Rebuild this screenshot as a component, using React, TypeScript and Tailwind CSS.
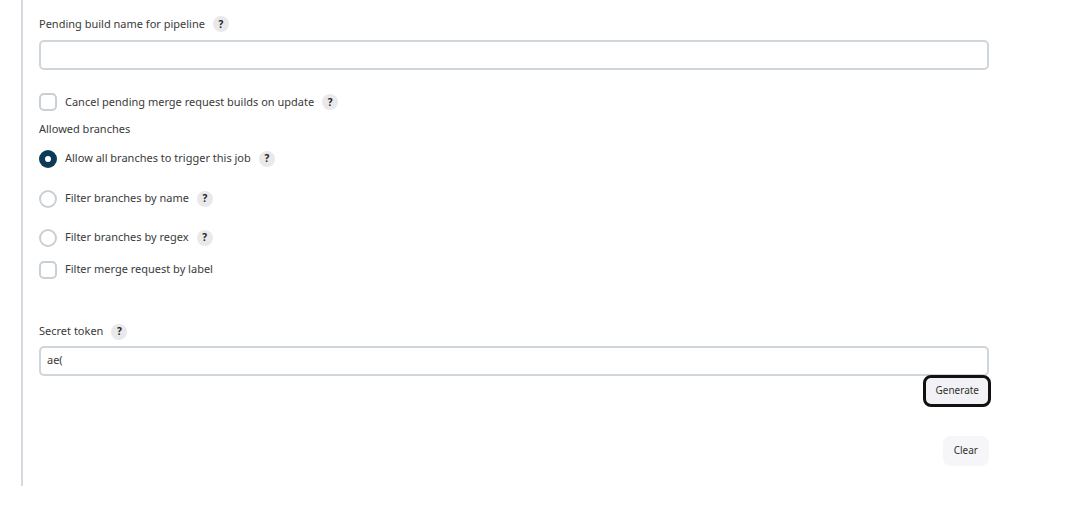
import { ReactNode } from "react";

const font = { fontFamily: '"Noto Sans", "Open Sans", sans-serif' };

function Help() {
  return (
    <span className="ml-2 inline-flex h-4 w-4 items-center justify-center rounded-full bg-[#e9e9ec] text-[10px] font-bold text-[#222]">
      ?
    </span>
  );
}

function Checkbox({ children }: { children: ReactNode }) {
  return (
    <div className="flex items-center">
      <span className="h-[18px] w-[18px] rounded-[5px] border-2 border-[#c8d0d6] bg-white" />
      <span className="ml-2 flex items-center">{children}</span>
    </div>
  );
}

function Radio({ checked, children }: { checked?: boolean; children: ReactNode }) {
  return (
    <div className="flex items-center">
      {checked ? (
        <span className="flex h-[18px] w-[18px] items-center justify-center rounded-full bg-[#0e3a5a]">
          <span className="h-[6px] w-[6px] rounded-full bg-white" />
        </span>
      ) : (
        <span className="h-[18px] w-[18px] rounded-full border-2 border-[#c8d0d6] bg-white" />
      )}
      <span className="ml-2 flex items-center">{children}</span>
    </div>
  );
}

export default function App() {
  return (
    <div className="h-[510px] w-[1092px] bg-white text-[11px] text-[#3a3a3a]" style={font}>
      <div className="ml-[21px] h-[486px] w-[calc(100%-21px)] border-l-2 border-[#d3d9de] pl-4 pt-[16px]">
        <div className="w-[950px]">
          <div className="flex h-4 items-center">
            Pending build name for pipeline
            <Help />
          </div>
          <div className="mt-2 h-[30px] rounded-[5px] border-2 border-[#cfd6db]" />

          <div className="mt-[23px]">
            <Checkbox>
              Cancel pending merge request builds on update
              <Help />
            </Checkbox>
          </div>
          <div className="mt-[10px]">Allowed branches</div>

          <div className="mt-[12px]">
            <Radio checked>
              Allow all branches to trigger this job
              <Help />
            </Radio>
          </div>
          <div className="mt-[22px]">
            <Radio>
              Filter branches by name
              <Help />
            </Radio>
          </div>
          <div className="mt-[21px]">
            <Radio>
              Filter branches by regex
              <Help />
            </Radio>
          </div>
          <div className="mt-[14px]">
            <Checkbox>Filter merge request by label</Checkbox>
          </div>

          <div className="mt-[45px] flex h-4 items-center">
            Secret token
            <Help />
          </div>
          <div className="mt-[6px] flex h-[30px] items-center rounded-[5px] border-2 border-[#cfd6db] px-[6px] text-[11px]">
            ae(
          </div>
          <div className="-mt-[1px] flex justify-end">
            <button className="-mr-[2px] h-[32px] rounded-[8px] border-[3px] border-[#111] bg-[#f2f2f6] px-[9px] text-[10px] text-[#333]">
              Generate
            </button>
          </div>
          <div className="mt-[29px] flex justify-end">
            <button className="h-[30px] rounded-[8px] bg-[#f6f6f8] px-[11px] text-[10px] text-[#333]">
              Clear
            </button>
          </div>
        </div>
      </div>
    </div>
  );
}
